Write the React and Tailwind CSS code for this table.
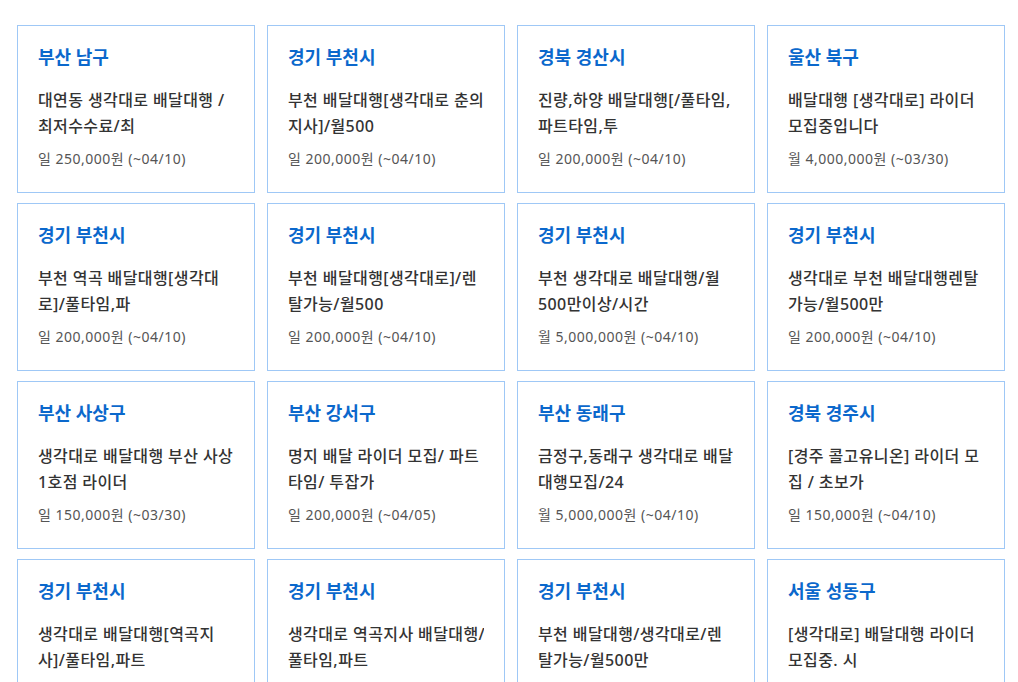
import React from 'react';

// Job listing cards: region, title lines (as wrapped in the original), pay
const JOBS = [
  { region: '부산 남구', lines: ['대연동 생각대로 배달대행 /', '최저수수료/최'], pay: '일 250,000원 (~04/10)' },
  { region: '경기 부천시', lines: ['부천 배달대행[생각대로 춘의', '지사]/월500'], pay: '일 200,000원 (~04/10)' },
  { region: '경북 경산시', lines: ['진량,하양 배달대행[/풀타임,', '파트타임,투'], pay: '일 200,000원 (~04/10)' },
  { region: '울산 북구', lines: ['배달대행 [생각대로] 라이더', '모집중입니다'], pay: '월 4,000,000원 (~03/30)' },
  { region: '경기 부천시', lines: ['부천 역곡 배달대행[생각대', '로]/풀타임,파'], pay: '일 200,000원 (~04/10)' },
  { region: '경기 부천시', lines: ['부천 배달대행[생각대로]/렌', '탈가능/월500'], pay: '일 200,000원 (~04/10)' },
  { region: '경기 부천시', lines: ['부천 생각대로 배달대행/월', '500만이상/시간'], pay: '월 5,000,000원 (~04/10)' },
  { region: '경기 부천시', lines: ['생각대로 부천 배달대행렌탈', '가능/월500만'], pay: '일 200,000원 (~04/10)' },
  { region: '부산 사상구', lines: ['생각대로 배달대행 부산 사상', '1호점 라이더'], pay: '일 150,000원 (~03/30)' },
  { region: '부산 강서구', lines: ['명지 배달 라이더 모집/ 파트', '타임/ 투잡가'], pay: '일 200,000원 (~04/05)' },
  { region: '부산 동래구', lines: ['금정구,동래구 생각대로 배달', '대행모집/24'], pay: '월 5,000,000원 (~04/10)' },
  { region: '경북 경주시', lines: ['[경주 콜고유니온] 라이더 모', '집 / 초보가'], pay: '일 150,000원 (~04/10)' },
  { region: '경기 부천시', lines: ['생각대로 배달대행[역곡지', '사]/풀타임,파트'], pay: '일 200,000원 (~04/10)' },
  { region: '경기 부천시', lines: ['생각대로 역곡지사 배달대행/', '풀타임,파트'], pay: '일 200,000원 (~04/10)' },
  { region: '경기 부천시', lines: ['부천 배달대행/생각대로/렌', '탈가능/월500만'], pay: '일 200,000원 (~04/10)' },
  { region: '서울 성동구', lines: ['[생각대로] 배달대행 라이더', '모집중. 시'], pay: '일 200,000원 (~04/10)' },
];

const JobCard = ({ job }) => (
  <div className="h-[168px] border border-[#9fc8f6] bg-white px-5 pt-[19px]">
    <div className="text-[18px] font-bold leading-6 text-[#0b68cc]">{job.region}</div>
    <div className="mt-[18px] text-[16px] font-medium leading-[26px] tracking-[0.4px] text-[#333333]">
      {job.lines.map((line, i) => (
        <div key={i} className="whitespace-nowrap overflow-hidden">{line}</div>
      ))}
    </div>
    <div className="mt-[10px] text-[14px] leading-5 tracking-[0.5px] text-[#555555]">{job.pay}</div>
  </div>
);

export default function App() {
  return (
    <div
      className="min-h-screen bg-white pl-[17px] pr-[13px] pt-[25px]"
      style={{ fontFamily: '"Noto Sans", "Noto Sans CJK KR", sans-serif' }}
    >
      <div className="grid grid-cols-4 gap-x-3 gap-y-[10px]">
        {JOBS.map((job, i) => (
          <JobCard key={i} job={job} />
        ))}
      </div>
    </div>
  );
}
